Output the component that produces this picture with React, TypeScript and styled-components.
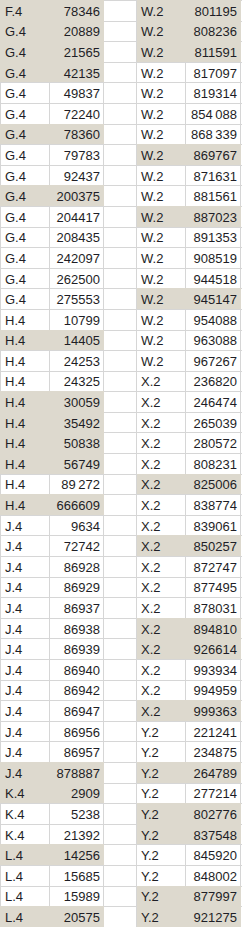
import React from "react";
import styled, { createGlobalStyle } from "styled-components";

const GlobalStyle = createGlobalStyle`
  html, body { margin: 0; padding: 0; background: #ffffff; }
  body { font-family: "Liberation Sans", Arial, sans-serif; }
`;

type Row = [string, string, boolean];

const left: Row[] = [
  ["F.4", "78346", true],
  ["G.4", "20889", true],
  ["G.4", "21565", true],
  ["G.4", "42135", true],
  ["G.4", "49837", false],
  ["G.4", "72240", false],
  ["G.4", "78360", true],
  ["G.4", "79783", false],
  ["G.4", "92437", false],
  ["G.4", "200375", true],
  ["G.4", "204417", false],
  ["G.4", "208435", false],
  ["G.4", "242097", false],
  ["G.4", "262500", false],
  ["G.4", "275553", false],
  ["H.4", "10799", false],
  ["H.4", "14405", true],
  ["H.4", "24253", false],
  ["H.4", "24325", false],
  ["H.4", "30059", true],
  ["H.4", "35492", true],
  ["H.4", "50838", true],
  ["H.4", "56749", true],
  ["H.4", "89\u2009272", false],
  ["H.4", "666609", true],
  ["J.4", "9634", false],
  ["J.4", "72742", false],
  ["J.4", "86928", false],
  ["J.4", "86929", false],
  ["J.4", "86937", false],
  ["J.4", "86938", false],
  ["J.4", "86939", false],
  ["J.4", "86940", false],
  ["J.4", "86942", false],
  ["J.4", "86947", false],
  ["J.4", "86956", false],
  ["J.4", "86957", false],
  ["J.4", "878887", true],
  ["K.4", "2909", true],
  ["K.4", "5238", false],
  ["K.4", "21392", false],
  ["L.4", "14256", true],
  ["L.4", "15685", false],
  ["L.4", "15989", false],
  ["L.4", "20575", true],
];

const right: Row[] = [
  ["W.2", "801195", true],
  ["W.2", "808236", true],
  ["W.2", "811591", true],
  ["W.2", "817097", false],
  ["W.2", "819314", false],
  ["W.2", "854\u2009088", false],
  ["W.2", "868\u2009339", false],
  ["W.2", "869767", true],
  ["W.2", "871631", false],
  ["W.2", "881561", false],
  ["W.2", "887023", true],
  ["W.2", "891353", false],
  ["W.2", "908519", false],
  ["W.2", "944518", false],
  ["W.2", "945147", true],
  ["W.2", "954088", false],
  ["W.2", "963088", false],
  ["W.2", "967267", false],
  ["X.2", "236820", false],
  ["X.2", "246474", false],
  ["X.2", "265039", false],
  ["X.2", "280572", false],
  ["X.2", "808231", false],
  ["X.2", "825006", true],
  ["X.2", "838774", false],
  ["X.2", "839061", false],
  ["X.2", "850257", true],
  ["X.2", "872747", false],
  ["X.2", "877495", false],
  ["X.2", "878031", false],
  ["X.2", "894810", true],
  ["X.2", "926614", true],
  ["X.2", "993934", false],
  ["X.2", "994959", false],
  ["X.2", "999363", true],
  ["Y.2", "221241", false],
  ["Y.2", "234875", false],
  ["Y.2", "264789", true],
  ["Y.2", "277214", false],
  ["Y.2", "802776", true],
  ["Y.2", "837548", true],
  ["Y.2", "845920", false],
  ["Y.2", "848002", false],
  ["Y.2", "877997", true],
  ["Y.2", "921275", true],
];

const GRID = "#d6d6d6";
const FILL = "#ddd9ce";

const Sheet = styled.div`
  display: grid;
  grid-template-columns: 50px 54px 33px 49px 55px 1px;
  grid-auto-rows: 20.6px;
  width: 242px;
  height: 927px;
  overflow: hidden;
  font-family: "Liberation Sans", Arial, sans-serif;
  font-size: 13px;
  color: #1e1e26;
`;

const Cell = styled.div<{ $fill?: boolean; $first?: boolean; $num?: boolean }>`
  box-sizing: border-box;
  display: flex;
  align-items: center;
  justify-content: ${(p) => (p.$num ? "flex-end" : "flex-start")};
  padding: ${(p) => (p.$num ? "1px 3px 0 0" : "1px 0 0 4px")};
  background: ${(p) => (p.$fill ? FILL : "#ffffff")};
  border-top: 1px solid ${(p) => (p.$fill ? FILL : GRID)};
  border-right: 1px solid ${(p) => (p.$fill ? FILL : GRID)};
  border-left: ${(p) => (p.$first ? `1px solid ${p.$fill ? FILL : GRID}` : "none")};
  white-space: nowrap;
  line-height: 1;
`;

const Gap = styled.div`
  box-sizing: border-box;
  background: #ffffff;
  border-top: 1px solid ${GRID};
  border-right: 1px solid ${GRID};
`;

const Edge = styled.div`
  background: #ffffff;
  border-top: 1px solid ${GRID};
`;

export default function App() {
  return (
    <>
      <GlobalStyle />
      <Sheet>
        {left.map((l, i) => {
          const r = right[i];
          return (
            <React.Fragment key={i}>
              <Cell $fill={l[2]} $first>{l[0]}</Cell>
              <Cell $fill={l[2]} $num>{l[1]}</Cell>
              <Gap />
              <Cell $fill={r[2]}>{r[0]}</Cell>
              <Cell $fill={r[2]} $num>{r[1]}</Cell>
              <Edge />
            </React.Fragment>
          );
        })}
      </Sheet>
    </>
  );
}
